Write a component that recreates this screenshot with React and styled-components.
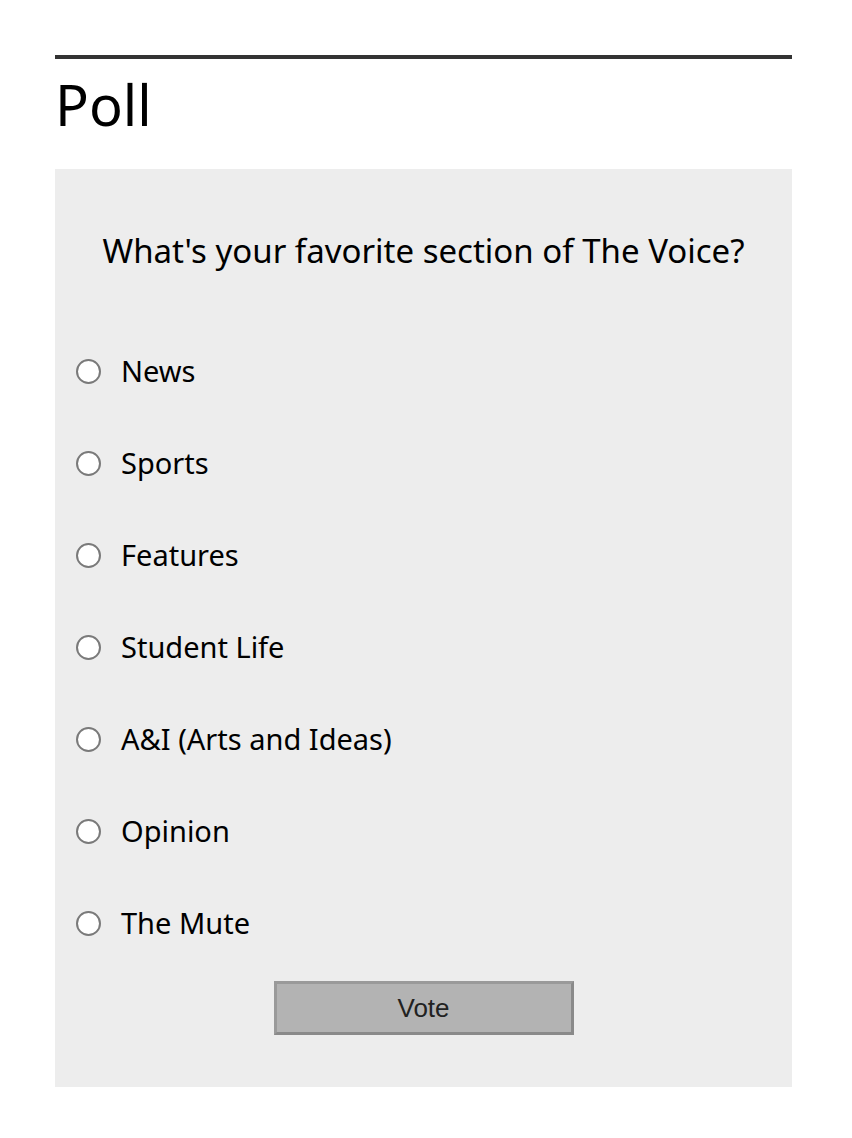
import React from "react";
import styled, { createGlobalStyle } from "styled-components";

const GlobalStyle = createGlobalStyle`
  body {
    margin: 0;
    background: #ffffff;
    font-family: "Noto Sans", "Open Sans", sans-serif;
    color: #000;
  }
`;

const Page = styled.div`
  padding: 55px 60px 40px 55px;
`;

const Rule = styled.hr`
  margin: 0;
  border: none;
  height: 4px;
  background: #333333;
`;

const Title = styled.h2`
  margin: 6px 0 0;
  font-size: 56px;
  font-weight: 400;
  line-height: 78px;
`;

const Panel = styled.form`
  margin-top: 26px;
  background: #ededed;
  padding: 58px 21px 52px;
  display: flex;
  flex-direction: column;
`;

const Question = styled.p`
  margin: 0 0 73px;
  text-align: center;
  font-size: 33px;
  line-height: 48px;
`;

const Options = styled.div`
  display: flex;
  flex-direction: column;
  gap: 46px;
`;

const Option = styled.label`
  display: flex;
  align-items: center;
  gap: 20px;
  font-size: 29px;
  line-height: 46px;
  height: 46px;
`;

const Radio = styled.input.attrs({ type: "radio" })`
  appearance: none;
  margin: 0;
  width: 25px;
  height: 25px;
  border-radius: 50%;
  border: 2px solid #7a7a7a;
  background: #ffffff;
  box-sizing: border-box;
`;

const VoteButton = styled.button`
  align-self: center;
  margin-top: 35px;
  width: 300px;
  height: 54px;
  background: #b3b3b3;
  border: 3px solid;
  border-color: #9a9a9a #8a8a8a #8a8a8a #9a9a9a;
  font-family: "Liberation Sans", Arial, sans-serif;
  font-size: 26px;
  color: #222222;
`;

const options = [
  "News",
  "Sports",
  "Features",
  "Student Life",
  "A&I (Arts and Ideas)",
  "Opinion",
  "The Mute",
];

const App = () => {
  return (
    <Page>
      <GlobalStyle />
      <Rule />
      <Title>Poll</Title>
      <Panel onSubmit={(e) => e.preventDefault()}>
        <Question>What's your favorite section of The Voice?</Question>
        <Options>
          {options.map((o) => (
            <Option key={o}>
              <Radio name="poll" />
              {o}
            </Option>
          ))}
        </Options>
        <VoteButton type="submit">Vote</VoteButton>
      </Panel>
    </Page>
  );
};

export default App;
